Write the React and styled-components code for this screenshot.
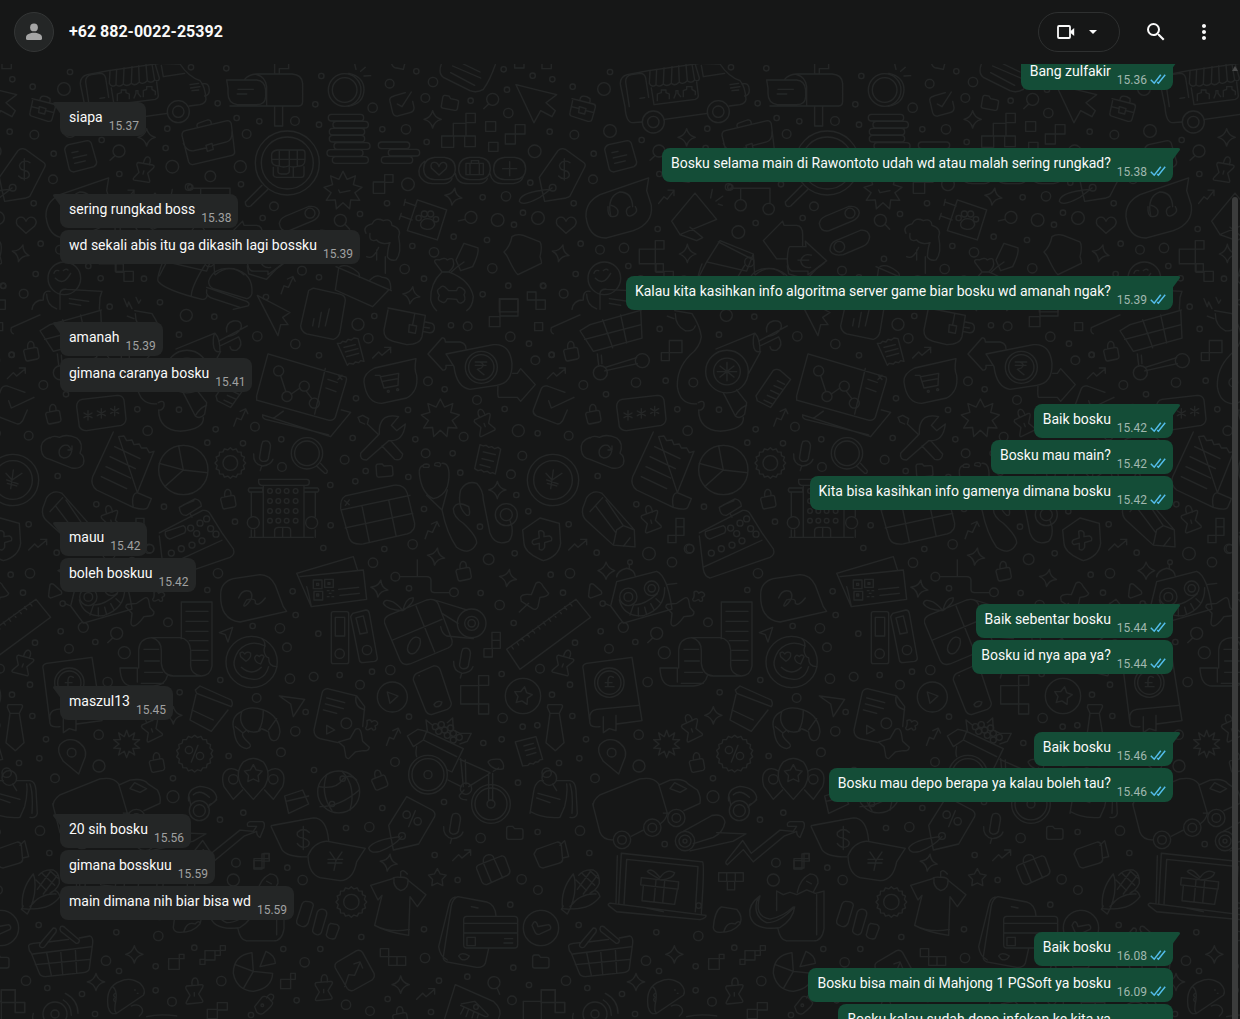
import React from "react";
import styled, { createGlobalStyle } from "styled-components";
import { MdMoreVert, MdSearch } from "react-icons/md";

const MESSAGES = [
  { text: "Bang zulfakir", time: "15.36", mine: true, first: true },
  { text: "siapa", time: "15.37", first: true },
  {
    text: "Bosku selama main di Rawontoto udah wd atau malah sering rungkad?",
    time: "15.38",
    mine: true,
    first: true,
  },
  { text: "sering rungkad boss", time: "15.38", first: true },
  { text: "wd sekali abis itu ga dikasih lagi bossku", time: "15.39" },
  {
    text: "Kalau kita kasihkan info algoritma server game biar bosku wd amanah ngak?",
    time: "15.39",
    mine: true,
    first: true,
  },
  { text: "amanah", time: "15.39", first: true },
  { text: "gimana caranya bosku", time: "15.41" },
  { text: "Baik bosku", time: "15.42", mine: true, first: true },
  { text: "Bosku mau main?", time: "15.42", mine: true },
  { text: "Kita bisa kasihkan info gamenya dimana bosku", time: "15.42", mine: true },
  { text: "mauu", time: "15.42", first: true },
  { text: "boleh boskuu", time: "15.42" },
  { text: "Baik sebentar bosku", time: "15.44", mine: true, first: true },
  { text: "Bosku id nya apa ya?", time: "15.44", mine: true },
  { text: "maszul13", time: "15.45", first: true },
  { text: "Baik bosku", time: "15.46", mine: true, first: true },
  { text: "Bosku mau depo berapa ya kalau boleh tau?", time: "15.46", mine: true },
  { text: "20 sih bosku", time: "15.56", first: true },
  { text: "gimana bosskuu", time: "15.59" },
  { text: "main dimana nih biar bisa wd", time: "15.59" },
  { text: "Baik bosku", time: "16.08", mine: true, first: true },
  { text: "Bosku bisa main di Mahjong 1 PGSoft ya bosku", time: "16.09", mine: true },
  { text: "Bosku kalau sudah depo infokan ke kita ya", time: "16.09", mine: true },
];

// n-pointed star around 0,0
function starPath(n, outer, inner) {
  const points = [];
  for (let i = 0; i < n * 2; i++) {
    const r = i % 2 ? inner : outer;
    const a = (Math.PI * i) / n - Math.PI / 2;
    points.push((r * Math.cos(a)).toFixed(1) + " " + (r * Math.sin(a)).toFixed(1));
  }
  return "M" + points.join("L") + "Z";
}

const GLYPHS = {
  sparkle: "M0-26Q5-5 26 0Q5 5 0 26Q-5 5-26 0Q-5-5 0-26Z",
  lock: "M-18-6L14-12Q19-12 20-7L24 16Q24 21 19 23L-10 29Q-15 29-16 24L-22 0Q-22-5-18-6M-10-8V-18Q-8-30 0-30Q10-28 9-12",
  pin: "M-8-24Q-10-46 2-46Q12-44 10-24M-24-22L20-26Q28-26 24-18L12 2L24 22Q26 28 18 28L-22 32Q-28 32-24 24L-14 6L-26-14Q-28-20-24-22M-1-2V8",
  zig: "M-28 16L-10-2L0 8L26-14M8-16L26-16L26 0",
  folder: "M-24-12Q-24-19-18-19H-6L0-12H18Q25-12 25-6V14Q25 20 18 20H-18Q-24 20-24 14Z",
  lens: "M-18 0A18 18 0 1 0 18 0A18 18 0 1 0-18 0M-12 14L-27 28",
  asterisk: "M0-14V14M-12-7L12 7M-12 7L12-7",
  mic: "M-4-36Q8-40 14-34Q20-28 18-16L12 16Q8 26-6 24Q-16 20-14 10L-8-26ZM-32 2Q-34 32-6 38Q20 36 26 18M-8 38L-12 52",
  clover: "M-14-12Q-4-18 0-8Q10-16 16-8T10 4Q16 18 4 16Q0 8-4 12Q-16 20-18 10Q-12 4-14-12Z",
  burst: starPath(9, 58, 36),
  smallBurst: starPath(10, 41, 23),
  star: starPath(5, 28, 15),
  gear: starPath(16, 46, 40),
  badge: starPath(18, 55, 49),
};

const DOODLES = [
  {
    at: "translate(0 60) scale(.3333)",
    circles:
      "210,36,8 37,58,8 98,80,8 192,87,19 29,215,8 103,224,13 305,240,8 161,281,8 159,358,13 358,342,8 502,206,8 497,264,8 517,320,19 573,22,8 679,25,8 653,130,8 710,174,8 778,184,8 885,183,13 740,222,13 721,320,18 723,373,8 631,349,16 571,382,8 822,439,13 788,474,8 101,430,8 122,551,8 107,642,8 265,618,8 302,655,8 432,656,8 10,678,8 71,701,13 480,727,8 329,740,8 798,711,8 906,632,13 535,155,33 535,155,17 340,186,33 340,186,17 862,309,96 862,309,78 38,383,10 193,655,49",
    glyphs: [
      ["lens", 357, 273],
      ["sparkle", 440, 232],
      ["pin", 432, 335, 15],
      ["sparkle", 62, 580, 15],
      ["zig", 862, 675, -25],
    ],
    paths: [
      "M255 140L241 72Q240 50 262 44L326 32L480 10L540 12Q565 50 600 62Q616 80 618 118Q616 130 600 134L568 138M502 160L374 178M255 140Q258 190 280 188L306 186",
      "M268 140L257 66Q256 48 274 44L300 40Q314 40 317 54L326 112M300 115l14-2M484 16L490 50L554 40M606 72Q628 66 628 90Q628 106 614 108M570 74l26-4M572 84l28-4M576 92l20-2",
      "M330 34L328 70Q336 84 348 74Q358 84 370 72Q382 82 394 70Q404 80 418 66Q430 76 442 62Q454 72 464 60Q478 66 478 54L466 14M348 74L350 28M370 72L372 24M394 70L396 20M418 66L416 18M442 62L438 14M464 60L456 12M334 84L342 134L466 118Q476 114 475 106L470 66",
      "M352 122v-20l12-4v-8h14v8l10 4v14M402 114l6-14v-8h6v8l8 10M430 110v-18l10-4v-8h16v8l10 6v10",
      "M690 138H896Q908 138 908 124V70Q906 44 876 42H770Q745 44 734 58M680 60H770Q795 62 797 90V110Q796 134 770 134H712Q684 130 684 100V84ZM800 138V80Q796 50 770 44M714 88h46M712 102h28M824 138v60h24v-60M824 42v-30M838 42v-16h28v-14",
      "M96 116L160 132Q168 134 166 142L156 178Q154 186 144 184L94 168Q88 166 90 158L98 122M120 118Q122 104 140 110L150 116V126M94 140L118 146M138 152L162 158M118 140l20 6-4 16-18-4z",
      "M556 212L682 182Q692 182 694 192L704 276Q704 284 696 286L578 314Q570 314 566 306L546 226Q546 214 556 212M592 202Q588 190 600 188L622 180Q634 178 634 192M550 250Q560 276 582 272L618 264M640 256L680 246Q698 240 696 214M618 256l18-6 4 18-18 6z",
      "M786 376L736 426Q736 444 752 438L804 388M832 270H908Q914 270 915 278V300Q914 320 896 318Q880 324 866 318Q850 324 838 318Q814 318 815 300V282Q818 272 832 270M838 274V316M868 270V318M892 270V316M815 298H915M820 322V346Q822 352 830 352H904Q912 352 912 344V320M834 322V336Q836 342 844 342H860Q868 340 868 334V322M880 352V322",
      "M6 390L-2 352L54 272Q64 262 76 268L132 308Q138 314 134 322L90 408Q86 412 78 414L14 424L6 390M30 388Q-60 396-62 424Q-50 440 0 412L36 384M90 308Q80 300 66 306Q52 316 64 328L82 334Q94 346 82 354Q66 360 56 348M73 296V360",
      "M206 254L262 242Q270 242 274 250L290 306Q290 316 282 320L222 336Q212 336 208 328L194 268Q196 258 206 254M216 278l18-4M220 294l40-9M224 310l32-7",
      "M78 520L52 496Q44 478 58 472Q72 468 78 484Q86 466 102 474Q114 484 104 498Z",
      "M326 354L180 404Q136 426 138 470Q146 536 200 534L280 512Q340 490 334 436L320 392ZM212 466Q200 410 240 396Q276 396 278 440M204 440q-2 30 14 30t16-14-20-20M270 440q-14 6-10 20t20 4 6-24",
      "M162 640q4-12 14-8M190 632q8-8 14-2M166 655Q190 680 212 640M150 694Q128 690 130 720Q100 720 96 748M180 748V700Q182 686 200 688L306 694L300 712L298 748M208 716l58 8M208 730l34 6",
      "M626 664Q640 620 700 626Q760 640 756 700Q752 714 740 716L640 686Q626 680 626 664M620 682L740 724Q752 730 744 738L700 748M620 690Q616 710 640 716L720 742M486 612Q468 660 476 666Q500 692 606 718Q620 720 622 704M614 616Q574 680 574 708",
      "M372 716l10 24 4-14 10 20M408 712l8 18 6-10M742 618L746 642L800 658L830 626L852 610M372 634h28v30h-28zM346 612v22h26",
    ],
  },
  {
    at: "translate(310 60) scale(.3333)",
    circles:
      "319,34,8 34,48,8 239,71,13 369,66,14 188,143,14 346,114,13 482,122,8 16,133,8 27,194,8 217,208,8 288,208,14 350,246,8 591,89,8 595,159,14 581,28,8 668,47,8 674,274,19 661,368,8 588,409,14 518,412,8 231,430,8 150,462,8 294,373,19 563,480,19 684,474,19 639,458,8 612,494,8 431,530,8 531,540,8 307,558,8 372,577,14 284,627,14 547,625,14 342,656,8 595,677,8 518,703,8 27,652,8 699,677,8 104,90,49 104,90,37 326,474,8 343,462,9 362,462,9 378,478,8",
    glyphs: [
      ["folder", 420, 128, 10],
      ["lens", 548, 118],
      ["sparkle", 368, 178],
      ["burst", 99, 392],
      ["sparkle", 430, 410, 10],
      ["lens", 91, 481, 270],
      ["lens", 483, 472, 30],
      ["sparkle", 304, 706, 10],
    ],
    paths: [
      "M116 40Q162 50 162 90Q160 132 116 138M134 12l4 16M152 34l14-12M162 48l20-1",
      "M65 163h86q10 0 10 10t-10 10h-86q-10 0-10-10t10-10M79 184h86q10 0 10 10t-10 10h-86q-10 0-10-10t10-10M68 205h86q10 0 10 10t-10 10h-86q-10 0-10-10t10-10M68 226h86q10 0 10 10t-10 10h-86q-10 0-10-10t10-10M82 248h88q10 0 10 10t-10 10h-88q-10 0-10-10t10-10M61 269h88q10 0 10 10t-10 10h-88q-10 0-10-10t10-10M77 290h88q10 0 10 10t-10 10h-88q-10 0-10-10t10-10",
      "M215 246h74q10 0 10 10t-10 10h-74q-10 0-10-10t10-10M245 268h74q10 0 10 10t-10 10h-74q-10 0-10-10t10-10M224 290h74q10 0 10 10t-10 10h-74q-10 0-10-10t10-10",
      "M286 98L252 108Q236 112 240 124L248 158Q252 170 264 168L300 158Q314 154 312 142L308 124M262 132L276 140L304 96",
      "M395 228h36v34h-36zM430 190h38v38h-38zM468 160h28v28h-28zM464 228h32v32h-32zM527 185h30v29h-30zM536 247h28v27h-28zM586 222h30v30h-30zM616 194h29v28h-29zM190 366h34v34h-34zM224 344h25v23h-25zM568 716h56v40h-56zM652 696h26v24h-26zM678 720h28v28h-28zM614 -4h28v28h-28zM696 -4h28v30h-28z",
      "M394 12Q384 40 400 52L480 92Q500 100 520 88Q540 60 556 14M422 38l72 38M428 18l84 36M460 12l50 24M245 12Q250 24 260 24L280 28L284 12",
      "M374 292H403Q436 296 436 326Q436 356 403 359H374Q341 356 341 326Q341 296 374 292M479 292H508Q541 296 541 326Q541 356 508 359H479Q446 356 446 326Q446 296 479 292M584 292H614Q647 296 647 326Q647 356 614 359H584Q551 356 551 326Q551 296 584 292M344 304Q322 320 328 346Q340 372 370 371H400Q420 370 426 356M436 340Q440 372 476 371H506Q526 370 532 356M540 340Q546 372 580 371H610Q634 368 640 350",
      "M387 345L364 324Q360 308 372 307Q384 306 387 320Q392 304 404 308Q414 314 408 326ZM468 310H520V344H468ZM480 310V344M508 310V344M484 310V302H506V310M578 326h42M599 305v42",
      "M618 74L740 104L708 128L736 152L726 170L692 152L672 188ZM86 390l4 8 30-6",
      "M322 420L410 450L382 540L292 512ZM286 418L282 436M284 426L318 438M274 460L268 478M272 468L306 480M352 476Q372 476 374 494Q368 510 350 508Q330 506 332 490Q338 476 352 476",
      "M168 520Q156 500 186 492Q196 470 220 482Q244 474 246 496Q276 506 266 530Q276 580 258 600Q240 604 232 590Q234 560 240 548Q214 556 200 540Q176 548 180 520M206 562Q190 600 170 590M226 590V640M200 570V600",
      "M462 550L504 564Q508 580 488 620L452 632L438 600ZM462 606Q440 620 424 636",
      "M378 612Q366 596 388 600Q404 590 412 600Q430 590 430 604Q436 620 416 636Q480 660 490 710Q488 740 470 752M396 636Q360 670 362 720Q366 740 380 752M378 612L396 636H416M388 706Q376 690 390 684Q398 672 410 686L416 692L440 692Q444 676 458 686Q470 694 462 704Q470 722 456 728Q446 734 440 718L412 716Q404 734 392 724Q380 720 388 706",
      "M78 620L244 692M86 624L76 690L188 740L236 690M90 620Q110 610 140 634Q150 640 148 652M180 660Q200 640 216 652Q244 650 242 690",
      "M582 576Q600 560 606 530Q620 520 640 526L690 546Q698 558 690 590Q696 606 694 610L624 644Q616 640 590 586Z",
    ],
  },
  {
    at: "translate(0 310) scale(.3333)",
    circles:
      "559,16,18 643,20,8 537,74,8 772,79,14 886,102,14 35,134,8 130,225,13 198,253,8 412,298,8 537,299,8 443,362,14 647,358,8 765,350,13 844,388,8 622,398,8 729,400,8 86,377,13 173,498,8 289,583,8 492,590,8 86,643,8 846,471,13 705,635,8 170,728,8 450,716,12 550,480,74 691,459,22 921,430,47 921,430,37 39,510,77 39,510,58 760,638,18 935,638,18 810,543,7 835,543,7 860,543,7 887,543,7 810,573,7 835,573,7 860,573,7 887,573,7 810,603,7 835,603,7 860,603,7 887,603,7 810,632,7 835,632,7 860,632,7 887,632,7",
    glyphs: [
      ["lock", 93, 124],
      ["lock", 159, 313],
      ["lock", 684, 568],
      ["zig", 50, 190],
      ["zig", 114, 704],
      ["zig", 720, 322, -25],
      ["asterisk", 264, 316],
      ["asterisk", 304, 310],
      ["asterisk", 344, 303],
      ["gear", 691, 459],
      ["mic", 793, 430],
      ["pin", 334, 632, -15],
    ],
    paths: [
      "M246 268L352 256Q368 256 372 270L378 326Q378 340 364 346L260 362Q244 362 238 350L230 290Q230 272 246 268",
      "M150 382Q120 392 124 420Q126 444 150 448L215 474Q240 478 250 462Q256 440 240 430Q252 400 230 384Q200 370 178 382Q160 376 150 384M215 424Q210 444 190 444Q174 440 178 420Q186 402 204 406L214 418M216 408V420H204",
      "M340 366L278 500Q270 524 290 540L400 592Q440 604 444 590L454 566L412 548Q396 550 398 580L400 592M412 548L462 424L448 428L440 414L424 414L418 402L402 404L396 390L380 392L372 378L356 380ZM344 410l76 36M330 440l76 36M318 470l74 34M304 500l76 36",
      "M550 480L536 408M550 480L478 460M550 480L494 530M550 480L620 488",
      "M40 480L36 510L32 536M36 510L66 490M36 510L18 490M20 510L54 522M22 520L50 528M950 468L974 490Q982 492 982 482L962 460",
      "M776 508H920Q928 508 928 516Q928 526 920 526H784Q776 524 776 516ZM790 526V680M912 528V682M748 534H788V546H748Q742 540 748 534M754 546V620M748 682H940M754 660V680M764 660V680M824 680V660Q826 652 836 652H862Q872 652 872 662V680M848 652V680M912 534H953Q960 540 953 546H912M946 546V620M946 660V682",
    ],
  },
  {
    at: "translate(310 310) scale(.3333)",
    circles:
      "144,43,18 193,18,8 175,85,14 27,136,8 423,46,8 473,49,13 601,80,14 657,101,8 725,135,8 676,151,13 354,214,13 404,238,8 501,270,13 584,297,8 138,265,8 294,300,8 128,384,8 316,388,8 461,380,13 625,362,18 683,370,8 347,430,13 428,430,8 104,449,13 167,483,8 136,514,8 295,501,8 451,488,8 637,437,13 603,493,13 619,555,8 61,525,8 62,646,8 342,597,8 655,604,8 510,650,8 40,714,8 223,717,8 308,703,14 614,730,8 536,748,16 235,244,3 263,239,3 514,172,48 514,172,38 589,614,33 589,614,18",
    glyphs: [
      ["zig", 216, 128],
      ["burst", 391, 325],
      ["pin", 524, 342, -20],
      ["folder", 223, 480, -4],
      ["sparkle", 562, 540],
      ["sparkle", 378, 740, 10],
      ["zig", 364, 660, -25],
    ],
    paths: [
      "M765 247L712 228Q700 226 694 236L670 300Q668 312 680 318L742 342Q752 342 758 332L772 300M716 272L724 294L792 262",
      "M234 0L222 60Q220 86 250 94L290 104Q330 104 336 80L346 16L234 -6M346 36L366 40Q376 46 372 60Q368 70 356 68L338 64M314 12L308 44M298 44L320 48L316 70L296 66ZM344 52l14 2",
      "M82 100l10 0 6-6 10 2 6-8 10 2 8-6 12 2 18 68-10-2-6 6-10-2-6 6-12-2-6 6zM102 112l34-8M106 126l38-10M110 140l36-10",
      "M318 146L194 174Q160 190 162 216Q170 280 215 280L290 264Q326 244 320 196Q312 180 318 146M196 196L210 196L222 234L264 226L266 190L214 200M218 214L264 206",
      "M354 132L396 84Q406 82 406 96H450Q468 100 468 116M354 132L398 180Q410 182 408 166H428M408 132L550 104Q600 100 606 160Q608 220 560 226L480 238Q440 232 432 170ZM608 190H622L632 176L676 224L632 274L622 262H566Q562 258 564 228M496 156h34M496 166h32M508 156q20 6 6 18l-12 4 20 16",
      "M538 20h32v30h-32zM570 -32h54v50h-54zM674 38h24v24h-24z",
      "M208 372L152 430Q148 450 170 450L236 392Q280 396 286 342L260 362L244 346L266 320Q214 308 208 356ZM216 408L254 448Q276 454 278 432L244 394M206 374L172 342L176 326L158 316L144 322L150 336L164 342",
      "M510 404l10 4 8-2 8 6 10-2 8 6 10-4 8 6-16 74-8-4-8 2-8-6-10 2-8-6-10 2-10-6zM520 426l36 8M516 446l34 8M510 464l30 8",
      "M106 558L250 526Q284 522 292 550L314 640Q316 664 292 672L160 702Q128 706 118 686L92 596Q90 566 106 558M94 600L300 556M106 654L308 610M156 588L178 696M236 570L258 676M104 572l14 12M118 570l-12 16",
      "M340 466Q326 470 328 490Q334 550 370 566Q400 560 412 530Q420 500 416 480Q412 458 396 460M340 472Q336 462 350 462Q362 464 356 472ZM374 466Q372 456 388 458Q396 464 388 470ZM350 556L396 600L412 540M396 600Q410 670 440 712Q480 740 500 700Q502 680 460 640Q430 620 430 596Q440 570 476 590Q484 620 470 616Q440 590 452 540Q470 510 500 520Q520 540 520 570L540 670Q556 710 596 694Q610 680 606 650L600 632",
      "M638 660L690 624L748 640L752 700Q746 740 700 752Q644 730 642 700ZM686 664q10-6 16 4v12l16-2q10 4 6 14l-20 6v14q-6 12-16 6v-18l-16 4q-10-6-2-14l18-6z",
    ],
  },
  {
    at: "translate(0 560) scale(.3333)",
    circles:
      "32,44,8 90,40,14 69,98,8 182,214,8 207,266,13 105,248,8 286,246,8 504,187,13 373,278,18 323,366,14 90,374,8 36,404,8 97,468,8 138,538,8 57,609,8 118,595,8 296,524,14 297,618,18 165,655,13 539,397,8 519,655,8 519,710,18 654,40,14 622,90,8 758,198,8 840,205,14 878,94,8 887,165,8 861,262,13 870,356,14 661,360,8 770,414,13 917,456,8 886,514,14 843,577,13 686,588,8 755,306,77 208,368,44 208,368,35 215,578,13 567,570,11 600,588,11 700,658,14 820,658,14",
    glyphs: [
      ["lens", 350, 220],
      ["clover", 476, 108],
      ["pin", 70, 314, 20],
      ["smallBurst", 380, 552],
      ["lock", 470, 608],
      ["pin", 456, 508, -20],
      ["sparkle", 520, 466],
      ["badge", 584, 581],
      ["star", 760, 642],
    ],
    paths: [
      "M410 130L434 114Q444 110 446 122L450 142L462 156Q462 168 450 168L432 170Q412 198 400 198Q390 196 394 180L396 160L378 142Q376 132 390 132Z",
      "M150 74Q156 68 164 76L184 94Q188 102 180 104L152 114Q144 112 146 104Z",
      "M544 236V126H636V318Q632 346 604 348Q574 344 572 318V270Q568 236 540 233H454Q418 236 416 270V324M454 233Q484 240 484 272V310Q488 346 520 348H604M360 324H412V366M360 324Q362 380 400 378H460Q496 376 502 348M558 154h66M558 184h66M558 214h66M568 242h56M576 271h48M576 301h48M432 268h44M434 303h44M434 337h54M424 370h66",
      "M850 140L826 76Q810 44 780 44L700 56Q662 66 662 104Q660 178 720 186L860 154ZM716 114Q726 86 750 94Q766 110 738 136Q724 144 740 120Q770 112 766 130Q776 140 796 114",
      "M658 218L698 202L684 246L676 224ZM838 408L914 418L880 470L872 432Z",
      "M796 258Q750 236 716 272Q684 320 726 350Q790 376 806 320M786 236Q800 246 792 270Q794 290 806 294Q806 320 830 320M722 290l-2-10q8-8 14 2q8-10 18-2q2 14-14 24ZM764 294q4-14 14-4q8-10 14 0l-10 22q-16-4-18-18M724 322Q756 350 784 322",
      "M130 330Q124 314 140 310L276 292L306 482L230 492M130 330L150 490Q152 504 180 500M150 478Q146 452 170 448L296 436M190 470v48l18-12 20 6v-46M220 352Q206 344 204 360V380H196L222 380M196 368h20",
      "M24 434H64Q70 436 66 444L58 460L72 548L46 572L18 548L30 460L22 442ZM30 460H58",
      "M236 642L190 604Q168 572 180 554Q200 532 228 542Q262 560 256 590Z",
      "M586 390L600 378L694 420Q700 432 694 440L590 400ZM588 404L570 480L634 514L684 450M576 450L640 480M594 556L574 606",
      "M702 510Q690 470 726 454Q750 436 790 450Q836 466 840 516Q836 544 820 542Q808 540 806 516Q780 500 780 512Q760 522 740 510L728 520Q724 530 746 548Q760 560 740 566Q706 560 702 510M726 454Q712 490 746 516M790 450Q790 490 776 512M706 500L728 518M830 476L806 510",
      "M760 718L726 680Q702 640 730 606Q760 584 790 606Q816 640 794 680ZM700 718L672 680Q660 640 684 628Q700 622 716 634M820 718L848 680Q860 640 836 628Q820 622 804 634M700 718L728 690M820 718L794 690",
    ],
  },
  {
    at: "translate(310 560) scale(.3333)",
    circles:
      "189,8,14 256,50,13 432,97,13 297,85,8 512,99,8 569,135,14 611,189,8 25,221,8 11,350,13 89,345,8 150,374,13 186,335,8 241,330,14 297,470,8 575,342,8 690,326,13 578,474,14 638,500,8 682,496,8 520,549,8 575,538,8 255,606,13 12,630,8 624,668,8 402,726,8 217,744,8 109,490,16 89,281,14 171,270,14 485,190,43 485,190,21 485,190,11 247,411,45 639,408,53 86,696,63 98,656,8 66,732,8 354,644,58 354,644,48 354,644,12 543,732,58 543,732,48 543,732,12 468,686,17 718,654,22 710,638,14 376,500,9 394,494,9 386,514,9 404,510,9 422,504,9 412,526,9 430,520,9 448,532,9 430,540,9",
    glyphs: [
      ["lock", 460, 34],
      ["sparkle", 208, 86, 10],
      ["sparkle", 594, 54, 10],
      ["mic", 463, 302],
      ["star", 639, 408, 10],
      ["clover", 185, 494],
      ["zig", 248, 530, -25],
      ["lock", 207, 660, -10],
    ],
    paths: [
      "M590 268L798 118L842 172L630 328ZM604 258l6 9M620 246l6 9M636 234l6 9M652 222l6 9M668 210l6 9M684 198l6 9M700 186l6 9M716 175l6 9M732 163l6 9M748 152l6 9M764 140l6 9M780 129l6 9",
      "M270 50H350Q362 50 363 60V90Q364 98 374 98H418M322 0V50",
      "M628 156L656 130M632 112Q636 100 664 104L678 70Q690 60 700 80L716 100Q714 110 690 112L684 140Q680 152 668 146L634 124Z",
      "M-30 50L160 30L170 118L4 140Q-4 100-10 80M4 140L-40 40L130-10L142 28M10 60h26v26h-26zM44 58h26v24h-26zM12 94h26v26h-26zM86 88l60-6M90 106l58-6M20 70h6v6h-6zM54 68h6v5h-6zM20 102h6v6h-6zM52 92h5M66 92h5M58 100h5M52 110h5M66 110h5",
      "M70 155H110Q116 155 116 161V305Q116 311 110 311H70Q64 311 64 305V161Q64 155 70 155M76 172H104V228H76ZM128 160L168 150Q176 150 178 160L202 294Q202 302 194 304L158 308Q150 308 148 300L122 170ZM138 174L160 168L172 218L150 222Z",
      "M224 190Q220 172 240 164L350 120Q374 114 384 130L426 240Q430 256 414 264L300 312Q278 318 270 300ZM248 240L396 178M318 138L374 276M278 152Q230 150 220 130Q224 114 250 126Q270 140 278 152Q290 110 310 114Q312 130 278 152M300 280Q284 270 302 242Q316 224 330 236Q336 256 318 276Q310 284 300 280M374 120L470 150M490 236L410 228Q396 222 392 200M396 160L444 190",
      "M546 217h25v24h-25zM546 241h25v24h-25zM522 266h25v25h-25zM452 377h54v55h-54zM506 347h30v29h-30zM506 432h30v30h-30z",
      "M320 340L370 318Q384 316 390 328L424 430Q424 442 412 448L364 464Q350 462 346 450L310 360Q310 346 320 340M372 434q8-14 24-8 -4 16-20 14zM327 347h1M232 396L264 408L240 430Z",
      "M52 386Q38 388 36 400L12 510Q12 530 30 536L84 548M52 386L140 408L164 440L158 500M138 410Q132 440 164 450M50 414l54 14M46 432l54 14M40 450l40 10M50 496L74 510L50 522ZM86 546L120 536L136 508Q150 500 154 520L158 544L178 562Q176 574 160 572L136 576L116 596Q106 596 106 580L102 560Z",
      "M616 546l62-16 20 68-8 2-6 6-8 0-6 6-10-2-6 6-16 2zM642 558l28-8M646 572l30-8M650 586l28-8",
      "M50 644Q30 700 66 752M96 634Q140 680 120 750M26 680Q80 690 100 656Q120 640 140 660M30 740Q90 740 148 690",
      "M292 528L324 508L350 514L340 540L310 560ZM350 514L460 566L426 636L412 630M320 560Q316 580 320 590M340 540L440 590M352 512L348 480L368 496M412 488L428 474L430 510L450 520L484 520L472 544L450 552M414 660L454 680M450 598L540 638M452 596L460 680M466 600L468 672M540 640L476 680M536 640V720M548 640V722M534 606Q540 596 570 598Q584 610 580 626Q560 634 540 616ZM550 634L566 624M462 690L448 706Q446 718 470 720",
      "M670 700Q674 670 690 662H700M740 662H780Q796 664 798 690L802 760Q798 776 780 772M660 760L672 690M770 672Q774 700 764 740L750 772Q700 776 664 756M780 672Q790 700 786 760M684 700l66 18M680 714l40 14M728 672l12 20",
    ],
  },
  {
    at: "translate(0 800) scale(.3333)",
    circles:
      "120,92,14 148,159,8 116,375,8 318,482,14 349,397,8 475,408,14 357,513,8 78,542,14 142,564,8 246,582,8 285,642,8 467,499,8 467,571,8 516,605,13 583,443,8 664,543,14 730,38,8 660,59,8 708,188,13 700,240,18 862,203,8 908,240,14 850,447,8 914,487,14 890,601,8 753,645,8 787,616,4 165,642,12 165,642,36",
    glyphs: [
      ["sparkle", 403, 463],
      ["sparkle", 288, 546],
      ["pin", 584, 580],
    ],
    paths: [
      "M100 222Q60 270 68 326L90 328Q110 280 104 236ZM90 326L82 342L64 328L70 318M90 320Q120 280 168 282M90 326Q150 330 180 290Q170 260 150 280M116 226Q130 208 160 210Q180 220 178 250Q170 270 150 280M108 240L140 272M126 220L164 256M150 212L176 236M112 268L150 216M130 282L172 226",
      "M86 440Q84 432 100 430L120 428M144 426L206 418M238 414L270 408Q280 412 278 430L268 506Q266 516 250 518L136 530Q122 530 118 520L94 460Q86 452 86 440M98 462L276 440M106 494L270 478M140 458L154 526M182 452L188 522M226 446L230 518M120 440Q116 434 124 426L160 384Q172 384 168 396L134 440Q126 446 120 440M182 380Q190 376 196 384L238 420Q238 432 228 430L182 394Q178 386 182 380",
      "M324 620Q316 560 360 544Q390 530 420 550Q440 570 430 586L350 640Q330 646 324 620M338 560Q352 570 348 600Q340 636 350 640M404 570h2M412 580h2M346 580q-10 6 0 12q-10 8 0 14",
      "M506 476h32v32h-32zM538 463h14v13h-14zM600 478h15v15h-15zM615 452h30v28h-30zM645 452h16v14h-16zM661 437h15v14h-15zM4 570h42v38h-42zM46 608h28v30h-28zM762 176h30v28h-30zM792 160h15v16h-15zM842 538h30v28h-30zM872 520h14v18h-14zM622 628h30v28h-30zM652 608h30v22h-30z",
      "M756 458Q700 466 700 520Q710 570 760 574Q816 566 818 520L760 514ZM780 500L798 454Q826 466 826 490ZM760 514L730 566M760 514L706 494",
      "M196 580Q234 600 234 640M190 600Q214 614 214 646M100 640q-4 14 0 20M764 620L786 592Q794 586 806 594L818 608Q820 616 790 640Q780 646 770 636ZM800 594q8-18 20-8q4 8-6 16M394 618q20-8 30 4t-6 26M440 650Q480 640 530 648",
      "M854 -12L908-30L926 12L866 40ZM858 4L926-12",
    ],
  },
  {
    at: "translate(310 800) scale(.3333)",
    circles:
      "178,81,14 108,84,8 374,165,8 512,114,14 443,240,8 635,238,14 684,270,13 683,96,8 601,314,8 342,388,8 154,411,8 31,447,8 345,474,14 387,542,8 472,530,8 610,503,8 657,555,8 606,601,13 108,614,14 180,633,13 233,597,8 363,636,8 276,108,10 290,44,11 323,64,11 693,384,53 124,306,23 498,621,7",
    glyphs: [
      ["mic", 433, 78],
      ["zig", 456, 166],
      ["folder", 614, 98],
      ["folder", 692, 484],
      ["sparkle", 236, 188, 10],
      ["sparkle", 272, 554],
      ["star", 382, 234],
      ["gear", 124, 306],
      ["pin", 42, 570],
      ["zig", 348, 582],
      ["lens", 552, 548, -70],
      ["lock", 270, 650],
    ],
    paths: [
      "M236 76L290-10L366 30Q378 38 374 50L326 132L250 150ZM268 110Q190 120 176 144Q180 162 210 154Q250 140 276 110M316 32L296 80",
      "M680 148L742 126Q752 126 754 136L758 180Q756 188 746 190L700 204Q688 204 686 194L672 162ZM750 136L764 122L776 170L758 174",
      "M672 366Q680 362 684 380L716 374Q726 380 720 388L690 402Q680 406 676 398L666 376Z",
      "M500 206Q498 198 508 194L574 168Q582 166 586 174L600 212Q600 222 592 226L530 254Q520 254 516 246ZM520 188L544 246M552 176L578 234M520 186Q518 168 536 164Q550 164 552 176",
      "M248 236L182 256L204 300L216 286L194 376Q230 396 296 406L300 290L322 320L348 284L296 242Q290 230 272 232Q250 230 248 236M252 234Q248 262 272 272Q296 266 294 240M272 232V216Q280 206 292 222M194 376Q240 400 298 388",
      "M40 328Q52 330 50 344L34 398Q30 406 20 404Q6 400 8 390L22 336Q28 326 40 328M62 370L82 374Q90 380 86 388L76 414Q70 420 56 414Q46 408 50 400L56 376ZM-14 304Q10 304 10 316L-6 370Q-14 384-28 378Q-42 374-40 362L-24 312Q-20 304-14 304",
      "M412 480Q390 470 386 440L418 310Q424 290 444 290L530 306Q556 314 558 348M400 470Q398 480 410 486L500 502Q520 504 526 490L536 446M400 470L424 316Q430 294 444 290M484 320l20 4M446 468q8-14 32 0q-8 16-24 10zM471 349H613Q623 349 623 359V434Q623 444 613 444H471Q461 444 461 434V359Q461 349 471 349M461 370H623M461 399H623M584 416h24M582 429h26M471 412H496V437H471Z",
      "M76 504Q72 492 82 486L140 452Q152 448 158 458L192 520Q196 532 186 540L132 570Q120 576 112 566ZM104 560L116 524L134 526L150 488M132 492L150 486L158 504",
      "M211 446h25v24h-25zM236 470h25v26h-25zM261 470h26v26h-26zM640 604h54v60h-54zM694 569h42v38h-42zM736 607h28v30h-28z",
      "M436 554L404 656M436 554L550 604Q580 630 566 656M454 612L494 604L534 644Q536 650 526 650L452 616M462 622l-10 20M476 628l-8 22M492 634l-6 20M506 640l-4 14",
    ],
  },
  // wide drawings, in units of a third by three fifths of a pixel
  {
    at: "translate(40 64) scale(.3333 .609)",
    flat: true,
    circles:
      "90,110,19 233,271,8 475,276,19 132,302,14 60,305,13 527,261,8 508,325,14 912,320,8 239,435,8 340,523,13 168,523,14 257,520,8 207,804,19 276,818,14 327,796,14 254,1281,8 356,1382,8 446,202,10 482,232,17 566,238,17 810,245,15 778,300,16 61,507,21 187,487,21 441,505,64 441,505,40 716,504,15 741,546,15 793,529,15 823,557,15 452,762,9 480,754,9 500,747,9 394,803,9 424,796,9 456,790,9 486,783,9 470,771,9 512,763,9 528,772,9 145,875,26 145,875,13 215,861,22 215,861,11 150,818,7 68,886,8 130,925,15 126,1274,26 126,1274,13 217,1254,26 217,1254,13 289,1238,26 289,1238,13 315,1276,29 315,1276,18 315,1276,6 478,1226,30 478,1226,18",
    glyphs: [],
    paths: [
      "M236 229L252 218L262 222L282 208M264 207H282V216M275 258L345 212L410 255L300 280ZM300 280L350 290L368 285L330 268M392 220l5-14M408 225l20-8M415 230l12 2M450 204H570V228M482 204V222",
      "M736 250L806 234Q834 232 838 244Q836 254 816 258L746 274Q722 276 718 262Q720 254 736 250M768 290L842 273Q866 272 869 284Q866 296 850 299L790 313Q758 316 750 306Q750 294 768 290",
      "M550 290L608 258L612 265H650Q668 266 668 280V298M550 290L590 320H622M630 300H678L676 291L740 323L684 346V340H640Q622 340 622 320Q624 300 630 300M694 314Q670 310 662 323Q666 336 692 334M654 322h32",
      "M358 348L380 325L420 290L520 312L524 345M380 325L500 340L520 312M415 292L522 322M526 346Q570 326 612 346",
      "M178 304h48v24h-48zM226 290h26v14h-26zM228 328h22v14h-22zM244 474h24v13h-24zM268 454h38v20h-38zM288 746h24v14h-24zM288 760h24v14h-24zM264 774h24v12h-24z",
      "M322 296Q326 308 348 312Q326 316 322 326Q318 316 298 312Q318 308 322 296M78 818Q84 828 104 832Q84 836 78 846Q72 836 54 832Q74 828 78 818",
      "M0 438L40 472L186 450L182 404M0 438L30 428L184 404M14 452L184 428M68 420L98 466M122 412L140 458M52 476L56 494M64 478L66 492M76 498L170 482M74 504L172 492M-80 443Q-90 440-86 433L0 412M20 378Q20 396 50 402",
      "M284 405L336 410Q360 430 364 448Q360 465 330 478Q290 500 292 530Q300 560 350 558M262 414l20 4M316 438Q286 430 286 410M316 438Q340 440 346 430M355 556Q375 550 372 562Q366 570 356 568Q356 600 420 603Q494 600 490 580",
      "M441 490V520M420 496L462 514M420 514L462 496M412 505H470M408 468L525 442M506 508L542 472M525 442Q540 450 540 472Q522 475 520 460Q519 445 525 442M536 455L622 430M540 463L596 448Q612 462 590 470Q572 472 570 464M560 440Q556 425 580 422Q606 420 604 432Q596 445 560 448M430 540L466 578Q480 584 494 575L500 556L470 535M466 578Q476 566 500 560",
      "M528 545L580 503Q590 500 600 503L632 518L572 564L532 553ZM552 552l24 6M562 544l24 6M572 536l24 6M582 528l24 6M592 520l22 6",
      "M650 545L684 476L918 514Q922 518 918 522L886 580Q880 586 868 585L650 552ZM856 500L824 575M864 518l28 5M858 532l30 6M896 512l10 6M906 511l-12 7M668 576L872 612L932 572L904 568M668 576Q666 582 680 584L866 609M700 582L730 570M722 512L737 537M754 542L780 532M800 538L815 549",
      "M806 372L782 430Q784 440 800 443L880 452Q896 450 900 440L916 388Q916 380 900 378L820 368ZM818 430l4-12M836 432l8-24M856 430l12-28M652 380L714 446L722 428H744L728 416L750 408Z",
      "M8 730Q4 742 20 750L100 790L165 793L163 765L66 705Q40 698 20 712ZM30 735L68 712M46 725L108 770M78 716L130 758M100 790L110 765L130 758L163 765M130 792L150 778",
      "M358 770L488 733Q506 732 512 740L546 770L580 796Q586 806 570 810L390 844Q374 842 370 830L358 775M370 826L546 782M376 768L430 758Q442 762 434 770L390 780Q374 778 376 768M418 728L465 714Q484 716 484 726L440 741Q420 742 418 728M430 724L462 717M450 738L456 744",
      "M92 890L110 850L230 833Q262 840 276 895L130 918ZM118 880Q130 908 190 906Q256 894 254 860M160 888Q190 890 232 870M150 905l10-16M175 907l0-14M200 904l-6-12M222 896l-10-10M240 884l-12-6M110 842Q112 832 140 828Q164 830 166 842M148 828V822M92 890L76 886M260 855L290 853",
      "M40 1220Q36 1210 60 1200L180 1174Q220 1170 236 1182L262 1230Q260 1240 240 1248M190 1258L154 1268M100 1274Q70 1275 60 1262L38 1215M236 1184L270 1176Q310 1172 324 1182L352 1192Q364 1204 360 1214L312 1226M270 1190L284 1180L320 1190L300 1196ZM266 1230L250 1230",
      "M310 1260L396 1234Q430 1230 435 1245Q430 1262 400 1270L340 1280M330 1292L460 1276L498 1264L410 1262M446 1210Q440 1190 480 1186Q524 1188 530 1204Q530 1212 508 1216M452 1216L446 1200M504 1220L530 1208M460 1200Q480 1190 508 1204",
      "M442 1315Q434 1312 440 1308L488 1275L514 1296L600 1258L640 1260L650 1252H624Q618 1246 630 1244H668Q676 1246 672 1254L660 1270Q650 1268 650 1260L612 1268L520 1310L490 1290Z",
      "M695 1254Q690 1250 700 1250L820 1238Q860 1238 866 1275M695 1254L726 1290Q740 1302 800 1302M804 1300Q820 1278 860 1276L976 1288L950 1310Q940 1340 900 1341L840 1336Q806 1330 804 1300M808 1262Q790 1252 772 1262Q768 1270 790 1271Q816 1276 804 1284Q786 1290 772 1280M790 1252V1290M870 1294L888 1308L906 1294M888 1308L882 1324M864 1306h44M864 1312h42",
      "M116 1380L124 1296L368 1310Q374 1316 364 1395M108 1378L112 1300M132 1380L140 1306L354 1318L346 1392M86 1382Q82 1380 90 1378L378 1398Q380 1402 360 1405L110 1392ZM200 1386L250 1392M184 1336L296 1343L294 1355L182 1348ZM190 1350L186 1374L284 1380L292 1356M228 1340L222 1376M254 1342L248 1378M238 1338Q210 1330 202 1326Q214 1318 240 1336Q260 1320 284 1328Q280 1338 242 1340",
      "M510 1398Q504 1380 540 1366L530 1375Q520 1400 560 1410Q600 1410 644 1384Q640 1404 600 1418Q520 1424 510 1398M540 1366Q520 1400 570 1404Q610 1400 640 1384M590 1390V1358L610 1364L630 1360L650 1364L680 1356L706 1362L732 1358V1420Q726 1440 700 1440H620Q600 1438 594 1420M710 1364V1430M652 1360Q660 1338 690 1330Q716 1330 714 1345L700 1360M680 1342l14 4",
      "M400 1418Q404 1390 424 1384L470 1388Q490 1400 480 1412Q460 1426 420 1426Q402 1426 400 1418M432 1424Q440 1408 466 1412Q474 1406 480 1410M416 1328h24v14h-24zM440 1328h26v14h-26zM466 1328h24v14h-24zM442 1342h22v14h-22zM642 1308h24v14h-24zM666 1297h22v12h-22z",
    ],
  },
];

function DoodleGroup({ at, circles, glyphs, paths, flat }) {
  return (
    <g transform={at}>
      {circles.split(" ").map((c) => {
        const [x, y, r] = c.split(",").map(Number);
        return <ellipse key={c} cx={x} cy={y} rx={r} ry={flat ? r * 0.547 : r} />;
      })}
      {glyphs.map(([name, x, y, turn = 0]) => (
        <path
          key={name + x + y}
          d={GLYPHS[name]}
          transform={`translate(${x} ${y}) rotate(${turn})`}
        />
      ))}
      {paths.map((d) => (
        <path key={d} d={d} />
      ))}
    </g>
  );
}

function Wallpaper() {
  return (
    <WallpaperSvg aria-hidden="true">
      <defs>
        <DoodleLines id="doodles">
          {DOODLES.map((group) => (
            <DoodleGroup key={group.at} {...group} />
          ))}
        </DoodleLines>
        <pattern id="tile" width="540" height="960" patternUnits="userSpaceOnUse">
          <use href="#doodles" x="-540" y="-64" />
          <use href="#doodles" y="-64" />
          <use href="#doodles" x="540" y="-64" />
        </pattern>
      </defs>
      <rect width="100%" height="100%" fill="url(#tile)" />
    </WallpaperSvg>
  );
}

function Message({ text, time, mine, first }) {
  return (
    <Row $mine={mine} $first={first}>
      <Bubble $mine={mine} $first={first}>
        {first ? (
          <Tail $mine={mine} viewBox="0 0 8 13" aria-hidden="true">
            <path
              d={
                mine
                  ? "M5.2 0H0v11.2l6.5-8.6C7.5 1.2 7 0 5.2 0z"
                  : "M1.5 2.6L8 11.2V0H2.8C1 0 .5 1.2 1.5 2.6z"
              }
            />
          </Tail>
        ) : null}
        <BubbleText>{text}</BubbleText>
        <Meta $mine={mine}>
          {time}
          {mine ? (
            <Ticks viewBox="0 0 16 12" aria-hidden="true">
              <path d="M.8 5.8L4.2 9.2L10.8 .8M7.2 8.2L8.4 9.2L15.2 .8" />
            </Ticks>
          ) : null}
        </Meta>
      </Bubble>
    </Row>
  );
}

function App() {
  return (
    <Page>
      <GlobalStyle />
      <Header>
        <Avatar>
          <svg width="24" height="24" viewBox="0 0 24 24" aria-hidden="true">
            <circle cx="12" cy="7.4" r="3.9" />
            <path d="M4 17.4C4 14.4 8.4 12.8 12 12.8S20 14.4 20 17.4V18.4Q20 20 18.4 20H5.6Q4 20 4 18.4Z" />
          </svg>
        </Avatar>
        <ContactName>+62 882-0022-25392</ContactName>
        <CallButton type="button" aria-label="Panggilan video">
          <svg width="20" height="20" viewBox="0 0 20 20" aria-hidden="true">
            <rect x="2" y="4" width="12" height="12" rx="1" fill="none" stroke="currentColor" strokeWidth="1.8" />
            <path d="M14 9.4L18.2 6V14L14 10.6Z" fill="currentColor" />
          </svg>
          <svg width="8" height="4" viewBox="0 0 8 4" aria-hidden="true">
            <path d="M0 0H8L4 4Z" fill="currentColor" />
          </svg>
        </CallButton>
        <IconButton type="button" aria-label="Cari">
          <MdSearch />
        </IconButton>
        <IconButton type="button" aria-label="Menu">
          <MdMoreVert />
        </IconButton>
      </Header>
      <Chat>
        <Wallpaper />
        <MessageList>
          {MESSAGES.map((message, i) => (
            <Message key={i} {...message} />
          ))}
        </MessageList>
        <ScrollTrack aria-hidden="true">
          <ScrollArrow />
          <ScrollThumb />
        </ScrollTrack>
      </Chat>
    </Page>
  );
}

const GlobalStyle = createGlobalStyle`
  * {
    box-sizing: border-box;
  }

  body {
    margin: 0;
    background: #161717;
    color: #fafafa;
    font-family: Roboto, "Liberation Sans", sans-serif;
  }
`;

const Page = styled.div`
  display: flex;
  flex-direction: column;

  height: 100vh;
  overflow: hidden;
`;

const Header = styled.header`
  display: flex;
  align-items: center;
  gap: 8px;

  flex: 0 0 64px;
  padding: 0 16px 0 14px;
`;

const Avatar = styled.div`
  display: flex;
  justify-content: center;
  align-items: center;

  width: 40px;
  height: 40px;
  border: 1px solid #343636;
  border-radius: 50%;
  background: #242626;

  svg {
    fill: #a5a5a5;
  }
`;

const ContactName = styled.h1`
  flex: 1;
  margin: 0;
  padding-left: 7px;

  font-size: 16px;
  font-weight: 700;
  line-height: 24px;
`;

const CallButton = styled.button`
  display: flex;
  justify-content: center;
  align-items: center;
  gap: 13px;

  width: 82px;
  height: 40px;
  margin-right: 8px;
  padding: 0 6px 0 0;
  border: 1px solid #2e3030;
  border-radius: 20px;
  background: none;
  color: #fafafa;
`;

const IconButton = styled.button`
  display: flex;
  justify-content: center;
  align-items: center;

  width: 40px;
  height: 40px;
  padding: 0;
  border: 0;
  border-radius: 50%;
  background: none;
  color: #fafafa;
  font-size: 24px;
`;

const Chat = styled.main`
  display: grid;
  grid-template-columns: 1fr 8px;
  grid-template-rows: 100%;

  flex: 1;
  min-height: 0;
  overflow: hidden;
`;

const WallpaperSvg = styled.svg`
  grid-area: 1 / 1 / 2 / 3;

  width: 100%;
  height: 100%;
`;

const DoodleLines = styled.g`
  fill: none;
  stroke: #242626;
  stroke-width: 1.3px;
  stroke-linecap: round;
  stroke-linejoin: round;

  path,
  ellipse {
    vector-effect: non-scaling-stroke;
  }
`;

const MessageList = styled.ul`
  grid-area: 1 / 1 / 2 / 2;
  z-index: 1;

  margin: -20px 0 0;
  padding: 0 59px 0 60px;
  list-style: none;
`;

const Row = styled.li`
  display: flex;
  justify-content: ${(props) => (props.$mine ? "flex-end" : "flex-start")};

  padding-top: ${(props) => (props.$first ? "12px" : "2px")};
`;

const Bubble = styled.div`
  position: relative;
  display: flex;
  align-items: flex-start;
  gap: 6px;

  padding: 5px 7px 2px 9px;
  border-radius: 8px;
  border-top-left-radius: ${(props) => (props.$first && !props.$mine ? 0 : "8px")};
  border-top-right-radius: ${(props) => (props.$first && props.$mine ? 0 : "8px")};
  background: ${(props) => (props.$mine ? "#144d37" : "#242626")};
`;

const Tail = styled.svg`
  position: absolute;
  top: 0;
  left: ${(props) => (props.$mine ? "100%" : "-8px")};

  width: 8px;
  height: 13px;
  fill: ${(props) => (props.$mine ? "#144d37" : "#242626")};
`;

const BubbleText = styled.span`
  font-size: 14px;
  line-height: 20px;
`;

const Meta = styled.span`
  display: flex;
  align-items: center;
  gap: 3px;

  margin-top: 11px;
  font-size: 12px;
  line-height: 16px;
  color: ${(props) => (props.$mine ? "#a1b8af" : "#a0a1a1")};
`;

const Ticks = styled.svg`
  width: 16px;
  height: 12px;
  fill: none;
  stroke: #53bdeb;
  stroke-width: 1.5px;
`;

const ScrollTrack = styled.div`
  grid-area: 1 / 2 / 2 / 3;
  z-index: 1;

  display: flex;
  flex-direction: column;
  gap: 126px;

  padding: 2px 2px 0 0;
`;

const ScrollArrow = styled.div`
  border: 3px solid transparent;
  border-top-width: 0;
  border-bottom: 5px solid #4a4b4b;
`;

const ScrollThumb = styled.div`
  flex: 1;
  border-radius: 3px 3px 0 0;
  background: #3b3c3c;
`;

export default App;
